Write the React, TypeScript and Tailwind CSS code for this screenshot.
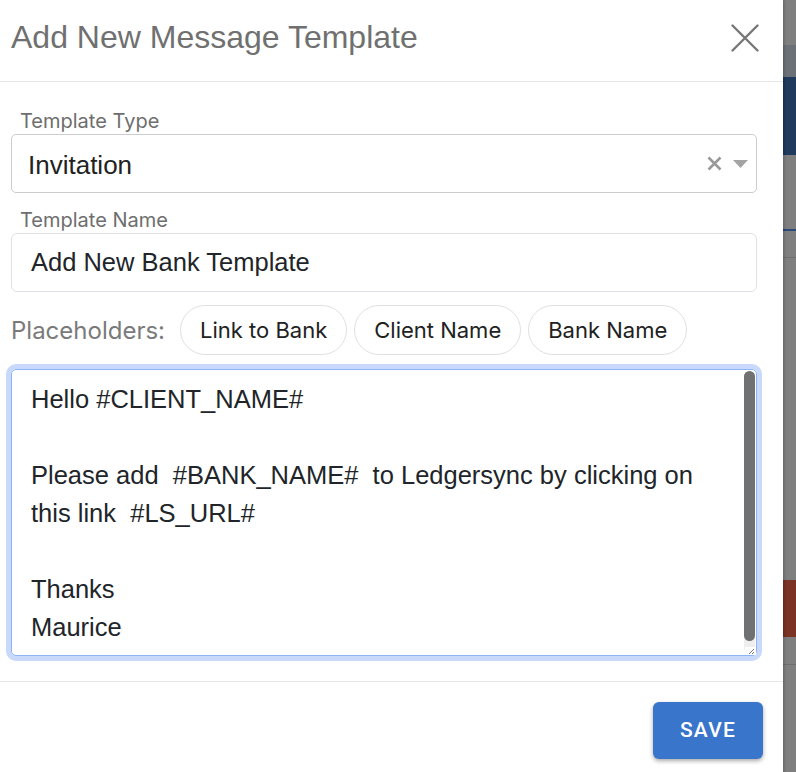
const lines = [
  "Hello #CLIENT_NAME#",
  "",
  "Please add  #BANK_NAME#  to Ledgersync by clicking on",
  "this link  #LS_URL#",
  "",
  "Thanks",
  "Maurice",
];

const chips = ["Link to Bank", "Client Name", "Bank Name"];

const CloseIcon = () => (
  <svg width="28" height="28" viewBox="0 0 28 28" fill="none">
    <path d="M1.5 1.5L26.5 26.5M26.5 1.5L1.5 26.5" stroke="#777" strokeWidth="2.4" strokeLinecap="round" />
  </svg>
);

const App = () => {
  return (
    <div className="flex h-[772px] w-[796px] overflow-hidden bg-[#7f7f7f]">
      <div className="relative z-10 flex w-[783px] flex-col bg-white shadow-[1px_0_3px_rgba(0,0,0,0.25)]">
        {/* header */}
        <div className="flex h-[82px] items-start justify-between border-b border-[#e6e6e6] pl-[11px] pr-[24px] pt-[19px]">
          <h1 className="font-['Liberation_Sans',Arial,sans-serif] text-[32px] leading-[36px] text-[#707070]">
            Add New Message Template
          </h1>
          <button className="mt-[5px]">
            <CloseIcon />
          </button>
        </div>

        {/* body */}
        <div className="flex flex-col pl-[11px] pr-[26px] pt-[27px]">
          <label className="pl-[9px] font-['Inter',sans-serif] text-[20px] leading-[24px] text-[#6e6e6e]">Template Type</label>
          <div className="mt-[1px] flex h-[59px] items-center justify-between rounded-[5px] border border-[#cccccc] pl-[16px] pr-[8px]">
            <span className="pt-[3px] font-['Liberation_Sans',Arial,sans-serif] text-[26px] text-[#222]">Invitation</span>
            <div className="flex items-center gap-[11px]">
              <svg width="15" height="15" viewBox="0 0 15 15">
                <path d="M1.5 1.5L13.5 13.5M13.5 1.5L1.5 13.5" stroke="#999" strokeWidth="2.6" />
              </svg>
              <svg width="15" height="8" viewBox="0 0 15 8">
                <path d="M0 0H15L7.5 8Z" fill="#a3a3a3" />
              </svg>
            </div>
          </div>

          <label className="mt-[15px] pl-[9px] font-['Inter',sans-serif] text-[20px] leading-[24px] text-[#6e6e6e]">Template Name</label>
          <div className="mt-[1px] flex h-[59px] items-center rounded-[6px] border border-[#dee2e6] pl-[19px]">
            <span className="font-['Liberation_Sans',Arial,sans-serif] text-[25.5px] text-[#212529]">Add New Bank Template</span>
          </div>

          <div className="mt-[13px] flex items-center">
            <span className="mr-[15px] pt-[1px] font-['Inter',sans-serif] text-[24px] text-[#7a7a7a]">Placeholders:</span>
            <div className="flex gap-[7px]">
              {chips.map((c) => (
                <button
                  key={c}
                  className="h-[50px] rounded-full border border-[#e0e0e0] px-[19px] pt-[1px] font-['Inter',sans-serif] text-[22px] text-[#212121]"
                >
                  {c}
                </button>
              ))}
            </div>
          </div>

          <div className="relative mt-[14px] h-[287px] rounded-[5px] border border-[#8db4f7] pl-[19px] pt-[10px] shadow-[0_0_0_5px_#c9d9fc]">
            {lines.map((l, i) => (
              <div key={i} className="h-[38px] whitespace-pre font-['Liberation_Sans',Arial,sans-serif] text-[25.5px] leading-[38px] text-[#212529]">
                {l}
              </div>
            ))}
            <div className="absolute right-[1px] top-[1px] h-[282px] w-[11px] rounded-full bg-[#eeeeee]" />
            <div className="absolute right-[1px] top-[1px] h-[270px] w-[11px] rounded-full bg-[#6f7173]" />
            <svg className="absolute bottom-0 right-0" width="11" height="8" viewBox="0 0 11 8">
              <rect x="0" y="0" width="11" height="8" fill="#fff" />
              <path d="M4 7L9 2M7 7L9 5" stroke="#777" strokeWidth="1" />
            </svg>
          </div>
        </div>

        {/* footer */}
        <div className="mt-[25px] flex justify-end border-t border-[#e6e6e6] pr-[20px] pt-[20px]">
          <button className="h-[57px] w-[110px] rounded-[6px] bg-[#3a75cc] font-['Roboto',sans-serif] text-[21px] font-medium tracking-[0.06em] text-white shadow-[0_2px_4px_rgba(0,0,0,0.35)]">
            SAVE
          </button>
        </div>
      </div>

      {/* dimmed page behind the dialog */}
      <div className="flex w-[13px] flex-col">
        <div className="h-[45px] bg-[#7f7f7f]" />
        <div className="h-[32px] bg-[#6c7177]" />
        <div className="h-[78px] bg-[#1f3a5c]" />
        <div className="h-[74px] bg-[#7f7f7f]" />
        <div className="h-[2px] bg-[#2a4a7a]" />
        <div className="h-[27px] border-b border-[#6e6e6e] bg-[#7f7f7f]" />
        <div className="h-[322px] bg-[#7f7f7f]" />
        <div className="h-[57px] bg-[#7a3325] shadow-[0_2px_3px_rgba(0,0,0,0.3)]" />
        <div className="h-[28px] border-b border-[#6e6e6e] bg-[#7f7f7f]" />
        <div className="flex-1 bg-[#7f7f7f]" />
      </div>
    </div>
  );
};

export default App;
